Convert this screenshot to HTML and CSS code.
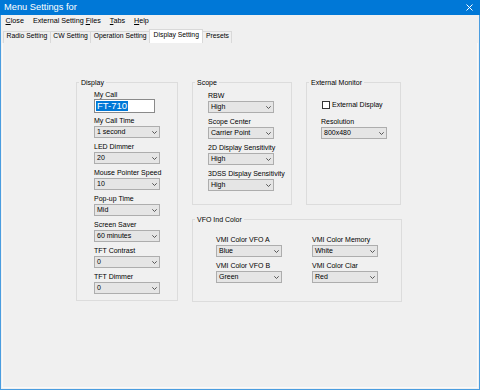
FILE: index.html
```html
<!DOCTYPE html>
<html lang="en">
<head>
  <meta charset="UTF-8">
  <title>Menu Settings for</title>
  <link rel="stylesheet" href="styles.css">
</head>
<body>
  <div class="window">
    <div class="titlebar">
      <span class="title">Menu Settings for</span>
      <svg class="close" width="7" height="7" viewBox="0 0 7 7">
        <path d="M0.5 0.5 L6.5 6.5 M6.5 0.5 L0.5 6.5" stroke="#fff" stroke-width="1" fill="none"/>
      </svg>
    </div>

    <div class="menubar">
      <span class="menu-item"><u>C</u>lose</span>
      <span class="menu-item">External Setting <u>F</u>iles</span>
      <span class="menu-item"><u>T</u>abs</span>
      <span class="menu-item"><u>H</u>elp</span>
    </div>

    <div class="tabs">
      <span class="tab">Radio Setting</span>
      <span class="tab">CW Setting</span>
      <span class="tab">Operation Setting</span>
      <span class="tab active">Display Setting</span>
      <span class="tab">Presets</span>
    </div>

    <div class="panel">
      <div class="layout">
        <fieldset class="group group-display">
          <legend>Display</legend>
          <div class="fields fields-display">
            <div class="field field-text">
              <label>My Call</label>
              <div class="textbox"><span class="sel">FT-710</span></div>
            </div>
            <div class="field">
              <label>My Call Time</label>
              <div class="combo"><span>1 second</span><svg width="5" height="3" viewBox="0 0 5 3"><path d="M0.3 0.3 L2.5 2.5 L4.7 0.3" stroke="#555" fill="none"/></svg></div>
            </div>
            <div class="field">
              <label>LED Dimmer</label>
              <div class="combo"><span>20</span><svg width="5" height="3" viewBox="0 0 5 3"><path d="M0.3 0.3 L2.5 2.5 L4.7 0.3" stroke="#555" fill="none"/></svg></div>
            </div>
            <div class="field">
              <label>Mouse Pointer Speed</label>
              <div class="combo"><span>10</span><svg width="5" height="3" viewBox="0 0 5 3"><path d="M0.3 0.3 L2.5 2.5 L4.7 0.3" stroke="#555" fill="none"/></svg></div>
            </div>
            <div class="field">
              <label>Pop-up Time</label>
              <div class="combo"><span>Mid</span><svg width="5" height="3" viewBox="0 0 5 3"><path d="M0.3 0.3 L2.5 2.5 L4.7 0.3" stroke="#555" fill="none"/></svg></div>
            </div>
            <div class="field">
              <label>Screen Saver</label>
              <div class="combo"><span>60 minutes</span><svg width="5" height="3" viewBox="0 0 5 3"><path d="M0.3 0.3 L2.5 2.5 L4.7 0.3" stroke="#555" fill="none"/></svg></div>
            </div>
            <div class="field">
              <label>TFT Contrast</label>
              <div class="combo"><span>0</span><svg width="5" height="3" viewBox="0 0 5 3"><path d="M0.3 0.3 L2.5 2.5 L4.7 0.3" stroke="#555" fill="none"/></svg></div>
            </div>
            <div class="field">
              <label>TFT Dimmer</label>
              <div class="combo"><span>0</span><svg width="5" height="3" viewBox="0 0 5 3"><path d="M0.3 0.3 L2.5 2.5 L4.7 0.3" stroke="#555" fill="none"/></svg></div>
            </div>
          </div>
        </fieldset>

        <div class="right-col">
          <div class="top-row">
            <fieldset class="group group-scope">
              <legend>Scope</legend>
              <div class="fields fields-scope">
                <div class="field">
                  <label>RBW</label>
                  <div class="combo"><span>High</span><svg width="5" height="3" viewBox="0 0 5 3"><path d="M0.3 0.3 L2.5 2.5 L4.7 0.3" stroke="#555" fill="none"/></svg></div>
                </div>
                <div class="field">
                  <label>Scope Center</label>
                  <div class="combo"><span>Carrier Point</span><svg width="5" height="3" viewBox="0 0 5 3"><path d="M0.3 0.3 L2.5 2.5 L4.7 0.3" stroke="#555" fill="none"/></svg></div>
                </div>
                <div class="field">
                  <label>2D Display Sensitivity</label>
                  <div class="combo"><span>High</span><svg width="5" height="3" viewBox="0 0 5 3"><path d="M0.3 0.3 L2.5 2.5 L4.7 0.3" stroke="#555" fill="none"/></svg></div>
                </div>
                <div class="field">
                  <label>3DSS Display Sensitivity</label>
                  <div class="combo"><span>High</span><svg width="5" height="3" viewBox="0 0 5 3"><path d="M0.3 0.3 L2.5 2.5 L4.7 0.3" stroke="#555" fill="none"/></svg></div>
                </div>
              </div>
            </fieldset>

            <fieldset class="group group-ext">
              <legend>External Monitor</legend>
              <div class="fields fields-ext">
                <div class="check"><span class="box"></span><span>External Display</span></div>
                <div class="field">
                  <label>Resolution</label>
                  <div class="combo"><span>800x480</span><svg width="5" height="3" viewBox="0 0 5 3"><path d="M0.3 0.3 L2.5 2.5 L4.7 0.3" stroke="#555" fill="none"/></svg></div>
                </div>
              </div>
            </fieldset>
          </div>

          <fieldset class="group group-vfo">
            <legend>VFO Ind Color</legend>
            <div class="vfo-grid">
              <div class="field">
                <label>VMI Color VFO A</label>
                <div class="combo"><span>Blue</span><svg width="5" height="3" viewBox="0 0 5 3"><path d="M0.3 0.3 L2.5 2.5 L4.7 0.3" stroke="#555" fill="none"/></svg></div>
              </div>
              <div class="field">
                <label>VMI Color Memory</label>
                <div class="combo"><span>White</span><svg width="5" height="3" viewBox="0 0 5 3"><path d="M0.3 0.3 L2.5 2.5 L4.7 0.3" stroke="#555" fill="none"/></svg></div>
              </div>
              <div class="field">
                <label>VMI Color VFO B</label>
                <div class="combo"><span>Green</span><svg width="5" height="3" viewBox="0 0 5 3"><path d="M0.3 0.3 L2.5 2.5 L4.7 0.3" stroke="#555" fill="none"/></svg></div>
              </div>
              <div class="field">
                <label>VMI Color Clar</label>
                <div class="combo"><span>Red</span><svg width="5" height="3" viewBox="0 0 5 3"><path d="M0.3 0.3 L2.5 2.5 L4.7 0.3" stroke="#555" fill="none"/></svg></div>
              </div>
            </div>
          </fieldset>
        </div>
      </div>
    </div>
  </div>
</body>
</html>
```

FILE: styles.css
```css
body {
  margin: 0;
  font-family: "Liberation Sans", Arial, sans-serif;
  font-size: 7px;
  color: #000;
  background: #fff;
}
.window {
  width: 480px;
  height: 390px;
  box-sizing: border-box;
  border: 1px solid #4a9de0;
  border-top: 0;
  background: #f0f0f0;
  display: flex;
  flex-direction: column;
}
.titlebar {
  margin: 0 -1px;
  height: 15px;
  background: #0078d7;
  color: #fff;
  display: flex;
  align-items: center;
  justify-content: space-between;
  padding: 0 7px 0 4px;
  font-size: 9.3px;
  line-height: 15px;
}
.close {
  display: block;
}
.menubar {
  display: flex;
  height: 14px;
  box-sizing: border-box;
  padding-bottom: 2px;
  font-size: 7.2px;
  line-height: 12px;
}
.menu-item {
  padding: 0 4.5px;
}
.tabs {
  display: flex;
  align-items: flex-end;
  height: 14px;
  padding-left: 2px;
}
.tab {
  height: 12px;
  box-sizing: border-box;
  border: 1px solid #d9d9d9;
  border-bottom: 0;
  margin-right: -1px;
  padding: 0 2.5px;
  font-size: 6.8px;
  line-height: 8px;
  background: #f0f0f0;
  white-space: nowrap;
}
.tab.active {
  height: 14px;
  padding: 1px 3.5px 0;
  background: #fff;
}
.panel {
  flex: 1;
  margin: 0 1px 1px;
  border: 1px solid #fafafa;
  border-top: 0;
}
.layout {
  display: flex;
  align-items: flex-start;
  padding: 35px 0 0 73px;
}
.right-col {
  margin-left: 14px;
}
.top-row {
  display: flex;
  gap: 14px;
}
.group {
  margin: 0;
  padding: 0;
  min-width: 0;
  box-sizing: border-box;
  border: 1px solid #dcdcdc;
}
.group legend {
  margin-left: 2px;
  padding: 0 2px;
  line-height: 9px;
  white-space: nowrap;
}
.group-display {
  width: 102px;
  height: 223px;
}
.group-scope {
  width: 100px;
  height: 127px;
}
.group-ext {
  width: 95px;
  height: 127px;
}
.group-vfo {
  width: 210px;
  height: 87px;
  margin-top: 10px;
}
.fields-display {
  padding: 3px 0 0 17px;
}
.fields-scope {
  padding: 4px 0 0 15px;
}
.fields-ext {
  padding: 13px 0 0 14px;
}
.field {
  margin-bottom: 4px;
}
.field label {
  display: block;
  line-height: 9px;
  margin-bottom: 1px;
  white-space: nowrap;
}
.field-text {
  margin-bottom: 3px;
}
.field-text label {
  margin-bottom: 0;
}
.textbox {
  width: 61px;
  height: 14px;
  box-sizing: border-box;
  border: 1px solid #8a8a8a;
  background: #fff;
  display: flex;
  align-items: center;
  padding-left: 1px;
  font-size: 9.5px;
}
.sel {
  background: #0078d7;
  color: #fff;
  line-height: 10px;
  padding: 0 1px;
}
.combo {
  width: 66px;
  height: 12px;
  box-sizing: border-box;
  border: 1px solid #adadad;
  background: #e5e5e5;
  display: flex;
  align-items: center;
  justify-content: space-between;
  padding: 0 2px;
  line-height: 10px;
  white-space: nowrap;
}
.combo svg {
  display: block;
}
.check {
  display: flex;
  align-items: center;
  gap: 2px;
  height: 9px;
  line-height: 9px;
  margin: 0 0 8px 1px;
}
.box {
  width: 8px;
  height: 8px;
  box-sizing: border-box;
  border: 1px solid #333;
  background: #fff;
}
.vfo-grid {
  display: grid;
  grid-template-columns: 66px 66px;
  column-gap: 30px;
  row-gap: 4px;
  padding: 11px 0 0 23px;
}
.vfo-grid .field {
  margin-bottom: 0;
}
```
